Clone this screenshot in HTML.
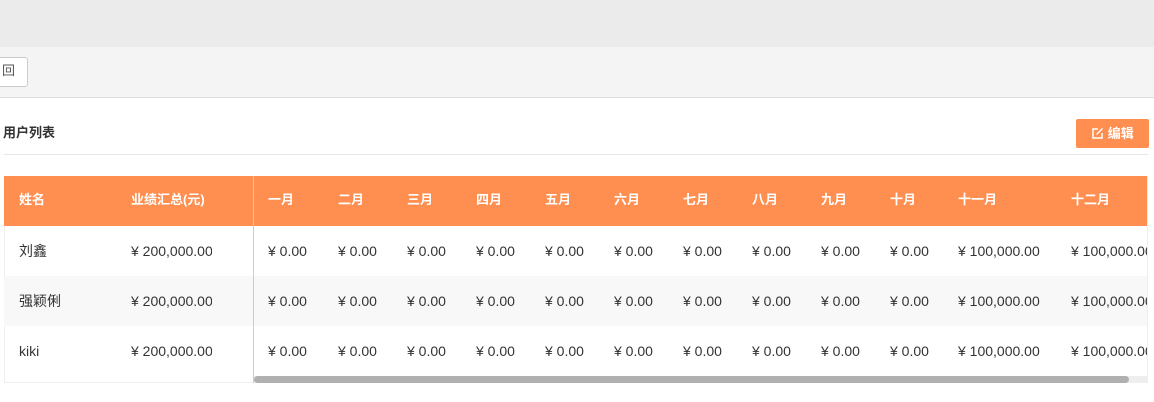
<!DOCTYPE html>
<html><head><meta charset="utf-8"><style>
body{margin:0;width:1154px;height:402px;background:#fff;font-family:"Liberation Sans","Noto Sans CJK SC",sans-serif;position:relative;overflow:hidden}
.a{position:absolute;white-space:nowrap}
.h{color:#fff;font-weight:bold;font-size:13px;top:192px;line-height:16px}
.c{color:#333;font-size:14px;line-height:16px}
</style></head><body>
<div class="a" style="left:0;top:0;width:1154px;height:47px;background:#ebebeb"></div>
<div class="a" style="left:0;top:47px;width:1154px;height:50px;background:#f4f4f4;border-bottom:1px solid #ddd"></div>
<div class="a" style="left:-20px;top:57px;width:46px;height:28px;background:#fff;border:1px solid #ccc;border-radius:3px"></div>
<div class="a" style="left:2px;top:63px;font-size:13px;color:#555;line-height:16px">回</div>
<div class="a" style="left:3px;top:125px;font-size:13px;font-weight:bold;color:#333;line-height:16px">用户列表</div>
<div class="a" style="left:1076px;top:119px;width:73px;height:29px;background:#ff8f50;border-radius:2px;color:#fff;font-size:13px;font-weight:bold;line-height:29px;text-align:center">
<svg width="13" height="13" viewBox="0 0 13 13" style="vertical-align:-2px"><path d="M7 2H2v9h9V6" stroke="#fff" stroke-width="1.5" fill="none"/><path d="M5 8l1-2 5-5 1 1-5 5z" fill="#fff"/></svg> 编辑</div>
<div class="a" style="left:4px;top:154px;width:1144px;height:1px;background:#e7e7e7"></div>
<div class="a" style="left:4px;top:176px;width:1144px;height:207px;border:1px solid #eee;box-sizing:border-box"></div>
<div class="a" style="left:4px;top:176px;width:1143px;height:50px;background:#ff8f50"></div>
<div class="a" style="left:4px;top:276px;width:1143px;height:50px;background:#f8f8f8"></div>
<div class="a" style="left:253px;top:176px;width:1px;height:207px;background:#ccc"></div>
<div class="a" style="left:254px;top:376px;width:893px;height:7px;background:#eee"></div>
<div class="a" style="left:254px;top:376px;width:875px;height:7px;background:#b0b0b0;border-radius:4px"></div>
<div class="a h" style="left:19px">姓名</div>
<div class="a h" style="left:131px">业绩汇总(元)</div>
<div class="a h" style="left:268px">一月</div><div class="a h" style="left:338px">二月</div><div class="a h" style="left:407px">三月</div><div class="a h" style="left:476px">四月</div><div class="a h" style="left:545px">五月</div><div class="a h" style="left:614px">六月</div><div class="a h" style="left:683px">七月</div><div class="a h" style="left:752px">八月</div><div class="a h" style="left:821px">九月</div><div class="a h" style="left:890px">十月</div><div class="a h" style="left:958px">十一月</div><div class="a h" style="left:1071px">十二月</div>
<div id="rows"></div>
<script>
var names=["刘鑫","强颖俐","kiki"],xs=[268,338,407,476,545,614,683,752,821,890],h="";
names.forEach(function(n,i){var t=243+i*50;
h+='<div class="a c" style="left:19px;top:'+t+'px">'+n+'</div>';
h+='<div class="a c" style="left:131px;top:'+t+'px;width:81px;overflow:hidden">¥ 200,000.00</div>';
xs.forEach(function(x){h+='<div class="a c" style="left:'+x+'px;top:'+t+'px">¥ 0.00</div>'});
h+='<div class="a c" style="left:958px;top:'+t+'px">¥ 100,000.00</div>';
h+='<div class="a c" style="left:1071px;top:'+t+'px;width:76px;overflow:hidden">¥ 100,000.00</div>';});
document.getElementById('rows').innerHTML=h;
</script>
</body></html>
